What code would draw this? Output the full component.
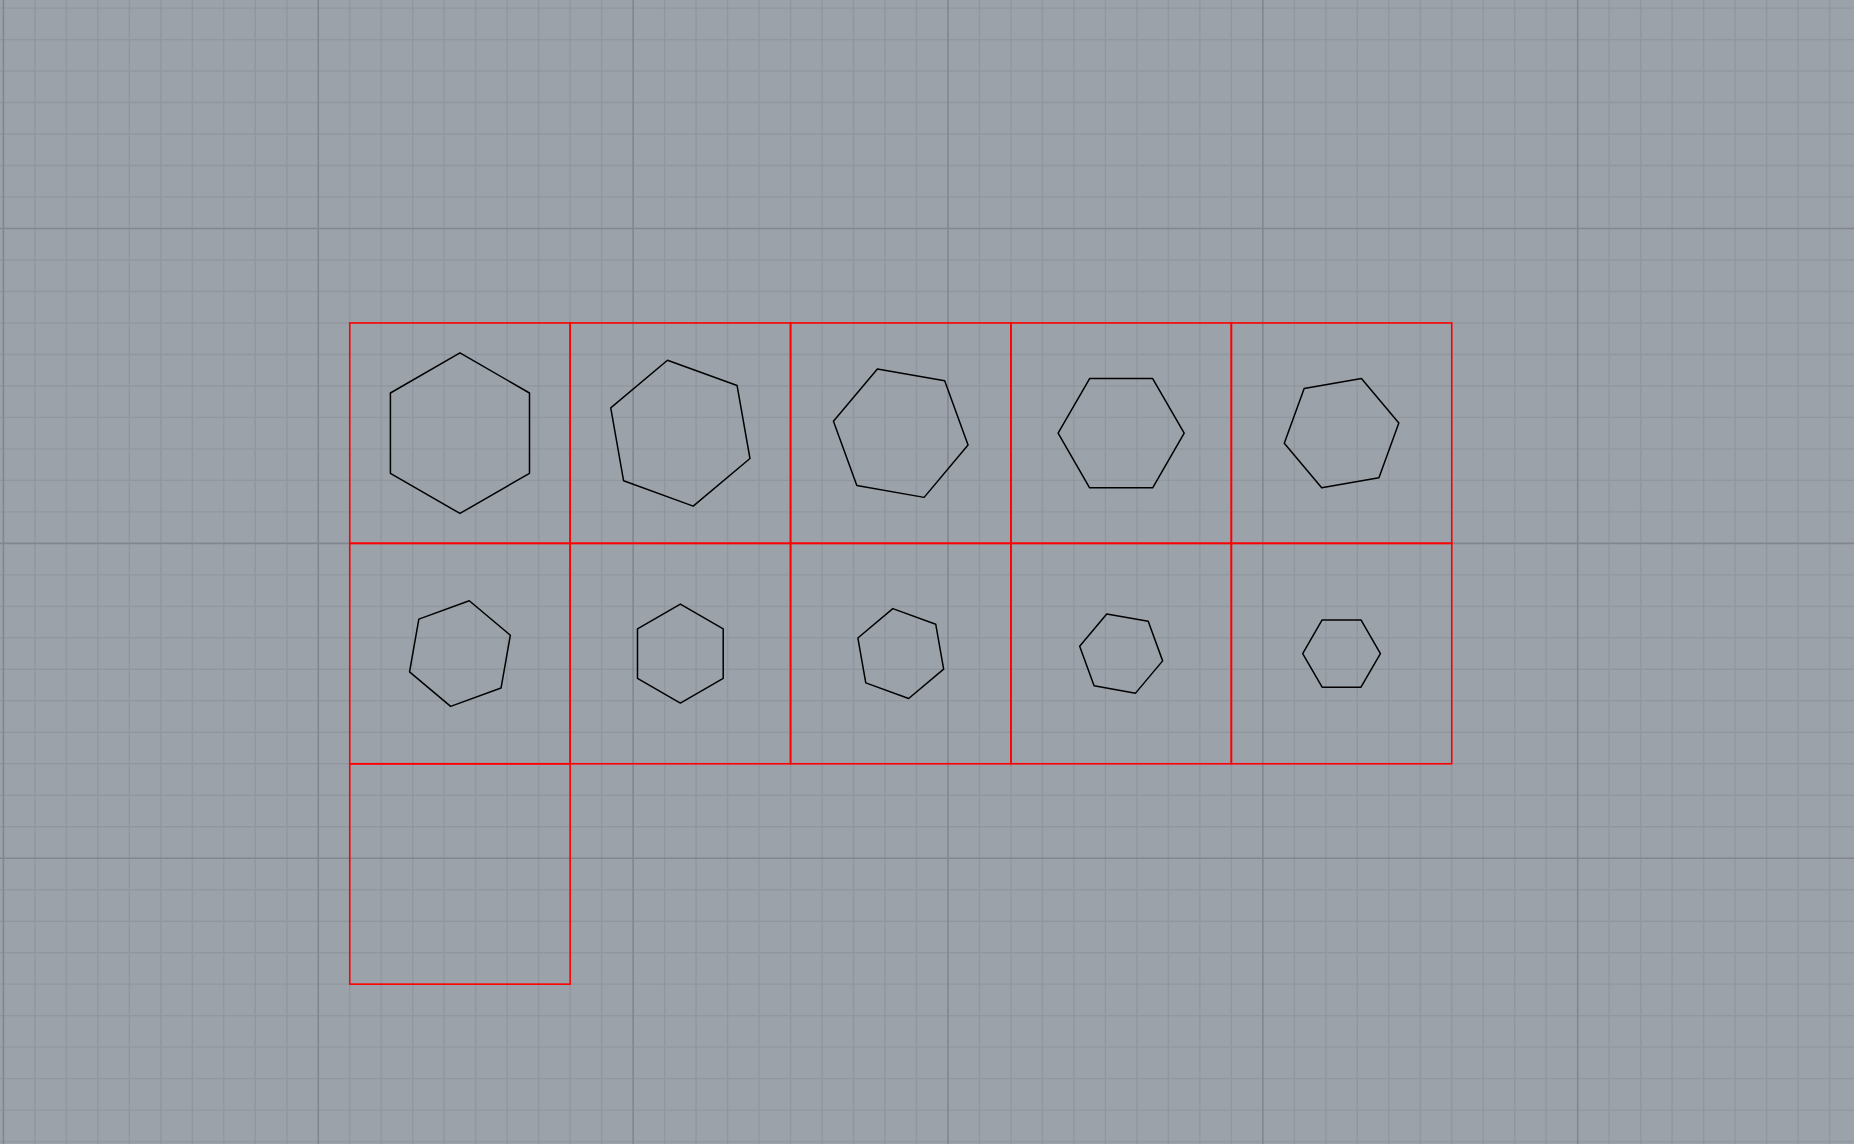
import React from "react";

const W = 1854;
const H = 1144;
const S = 31.486; // minor grid spacing
const X0 = 3.4;
const Y0 = 8.1;
const CELL = S * 7;
const GX = X0 + S * 11;
const GY = Y0 + S * 10;

function hexPoints(cx: number, cy: number, r: number, deg: number) {
  const pts: string[] = [];
  for (let k = 0; k < 6; k++) {
    const a = ((deg + 60 * k) * Math.PI) / 180;
    pts.push(`${(cx + r * Math.cos(a)).toFixed(2)},${(cy - r * Math.sin(a)).toFixed(2)}`);
  }
  return pts.join(" ");
}

export default function App() {
  const minorV: number[] = [];
  const majorV: number[] = [];
  for (let k = 0; X0 + S * k < W + 2; k++) {
    const x = X0 + S * k;
    if (k % 10 === 0) majorV.push(x);
    else minorV.push(x);
  }
  const minorH: number[] = [];
  const majorH: number[] = [];
  for (let k = 0; Y0 + S * k < H + 2; k++) {
    const y = Y0 + S * k;
    if (k % 10 === 7) majorH.push(y);
    else minorH.push(y);
  }

  const cells: { r: number; c: number }[] = [];
  for (let r = 0; r < 2; r++) for (let c = 0; c < 5; c++) cells.push({ r, c });

  return (
    <div className="w-[1854px] h-[1144px] bg-[#9ca2aa] overflow-hidden">
      <svg width={W} height={H} viewBox={`0 0 ${W} ${H}`} className="block">
        {minorV.map((x, i) => (
          <line key={`mv${i}`} x1={x} y1={0} x2={x} y2={H} stroke="#91979f" strokeWidth={1.4} />
        ))}
        {minorH.map((y, i) => (
          <line key={`mh${i}`} x1={0} y1={y} x2={W} y2={y} stroke="#91979f" strokeWidth={1.4} />
        ))}
        {majorV.map((x, i) => (
          <line key={`Mv${i}`} x1={x} y1={0} x2={x} y2={H} stroke="#82878f" strokeWidth={1.6} />
        ))}
        {majorH.map((y, i) => (
          <line key={`Mh${i}`} x1={0} y1={y} x2={W} y2={y} stroke="#82878f" strokeWidth={1.6} />
        ))}

        {cells.map(({ r, c }) => {
          const i = r * 5 + c;
          const cx = GX + CELL * (c + 0.5);
          const cy = GY + CELL * (r + 0.5);
          const rad = 80.3 * Math.pow(0.9225, i);
          return (
            <polygon
              key={`h${i}`}
              points={hexPoints(cx, cy, rad, 90 + 10 * i)}
              fill="none"
              stroke="#000000"
              strokeWidth={1.5}
              strokeLinejoin="round"
            />
          );
        })}

        {cells.map(({ r, c }) => (
          <rect
            key={`c${r}-${c}`}
            x={GX + CELL * c}
            y={GY + CELL * r}
            width={CELL}
            height={CELL}
            fill="none"
            stroke="#ff0000"
            strokeWidth={1.6}
          />
        ))}
        <rect x={GX} y={GY + CELL * 2} width={CELL} height={CELL} fill="none" stroke="#ff0000" strokeWidth={1.6} />
      </svg>
    </div>
  );
}
